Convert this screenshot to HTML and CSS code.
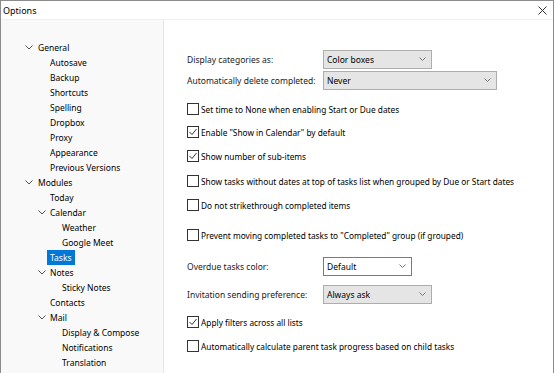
FILE: index.html
```html
<!DOCTYPE html>
<html>
<head>
<meta charset="utf-8">
<link rel="stylesheet" href="styles.css">
</head>
<body>
<div class="window">
  <div class="titlebar">
    <span class="title">Options</span>
    <svg class="close" width="9" height="9" viewBox="0 0 9 9"><path d="M0.5 0.5 L8.5 8.5 M8.5 0.5 L0.5 8.5" stroke="#333" stroke-width="1" fill="none"/></svg>
  </div>
  <div class="main">
    <div class="sidebar">
      <div class="node l0"><svg class="chev" width="8" height="5" viewBox="0 0 8 5"><polyline points="0.5,0.5 4,4 7.5,0.5" fill="none" stroke="#555" stroke-width="1"/></svg><span>General</span></div>
      <div class="node l1"><span>Autosave</span></div>
      <div class="node l1"><span>Backup</span></div>
      <div class="node l1"><span>Shortcuts</span></div>
      <div class="node l1"><span>Spelling</span></div>
      <div class="node l1"><span>Dropbox</span></div>
      <div class="node l1"><span>Proxy</span></div>
      <div class="node l1"><span>Appearance</span></div>
      <div class="node l1"><span>Previous Versions</span></div>
      <div class="node l0"><svg class="chev" width="8" height="5" viewBox="0 0 8 5"><polyline points="0.5,0.5 4,4 7.5,0.5" fill="none" stroke="#555" stroke-width="1"/></svg><span>Modules</span></div>
      <div class="node l1"><span>Today</span></div>
      <div class="node l1"><svg class="chev" width="8" height="5" viewBox="0 0 8 5"><polyline points="0.5,0.5 4,4 7.5,0.5" fill="none" stroke="#555" stroke-width="1"/></svg><span>Calendar</span></div>
      <div class="node l2"><span>Weather</span></div>
      <div class="node l2"><span>Google Meet</span></div>
      <div class="node l1"><span class="selected">Tasks</span></div>
      <div class="node l1"><svg class="chev" width="8" height="5" viewBox="0 0 8 5"><polyline points="0.5,0.5 4,4 7.5,0.5" fill="none" stroke="#555" stroke-width="1"/></svg><span>Notes</span></div>
      <div class="node l2"><span>Sticky Notes</span></div>
      <div class="node l1"><span>Contacts</span></div>
      <div class="node l1"><svg class="chev" width="8" height="5" viewBox="0 0 8 5"><polyline points="0.5,0.5 4,4 7.5,0.5" fill="none" stroke="#555" stroke-width="1"/></svg><span>Mail</span></div>
      <div class="node l2"><span>Display &amp; Compose</span></div>
      <div class="node l2"><span>Notifications</span></div>
      <div class="node l2"><span>Translation</span></div>
    </div>
    <div class="content">
      <div class="row sel-row">
        <span class="label">Display categories as:</span>
        <div class="select gray w109"><span>Color boxes</span><svg class="dd" width="7" height="4" viewBox="0 0 7 4"><polyline points="0.5,0.5 3.5,3.5 6.5,0.5" fill="none" stroke="#777" stroke-width="1"/></svg></div>
      </div>
      <div class="row sel-row mt3">
        <span class="label">Automatically delete completed:</span>
        <div class="select gray w174"><span>Never</span><svg class="dd" width="7" height="4" viewBox="0 0 7 4"><polyline points="0.5,0.5 3.5,3.5 6.5,0.5" fill="none" stroke="#777" stroke-width="1"/></svg></div>
      </div>
      <div class="row check mt11"><span class="box"></span><span>Set time to None when enabling Start or Due dates</span></div>
      <div class="row check mt5"><span class="box"><svg width="10" height="10" viewBox="0 0 10 10"><polyline points="1.5,5 4,7.5 8.5,2" fill="none" stroke="#333" stroke-width="1"/></svg></span><span>Enable "Show in Calendar" by default</span></div>
      <div class="row check mt6"><span class="box"><svg width="10" height="10" viewBox="0 0 10 10"><polyline points="1.5,5 4,7.5 8.5,2" fill="none" stroke="#333" stroke-width="1"/></svg></span><span>Show number of sub-items</span></div>
      <div class="row check mt7"><span class="box"></span><span>Show tasks without dates at top of tasks list when grouped by Due or Start dates</span></div>
      <div class="row check mt6"><span class="box"></span><span>Do not strikethrough completed items</span></div>
      <div class="row check mt12"><span class="box"></span><span>Prevent moving completed tasks to "Completed" group (if grouped)</span></div>
      <div class="row sel-row mt13">
        <span class="label">Overdue tasks color:</span>
        <div class="select white w89"><span>Default</span><svg class="dd" width="7" height="4" viewBox="0 0 7 4"><polyline points="0.5,0.5 3.5,3.5 6.5,0.5" fill="none" stroke="#777" stroke-width="1"/></svg></div>
      </div>
      <div class="row sel-row mt10">
        <span class="label">Invitation sending preference:</span>
        <div class="select gray w109"><span>Always ask</span><svg class="dd" width="7" height="4" viewBox="0 0 7 4"><polyline points="0.5,0.5 3.5,3.5 6.5,0.5" fill="none" stroke="#777" stroke-width="1"/></svg></div>
      </div>
      <div class="row check mt10"><span class="box"><svg width="10" height="10" viewBox="0 0 10 10"><polyline points="1.5,5 4,7.5 8.5,2" fill="none" stroke="#333" stroke-width="1"/></svg></span><span>Apply filters across all lists</span></div>
      <div class="row check mt6"><span class="box"></span><span>Automatically calculate parent task progress based on child tasks</span></div>
    </div>
  </div>
</div>
</body>
</html>
```
FILE: styles.css
```css
* { box-sizing: border-box; }
html, body { margin: 0; padding: 0; background: #fff; }
body {
  font-family: "Noto Sans", "Open Sans", sans-serif;
  font-size: 8.5px;
  color: #000;
}
.window {
  width: 554px;
  height: 373px;
  border-top: 1px solid #8c8c8c;
  border-left: 1px solid #8c8c8c;
  border-right: 1px solid #8c8c8c;
  display: flex;
  flex-direction: column;
  overflow: hidden;
}
.titlebar {
  height: 19px;
  display: flex;
  align-items: center;
  justify-content: space-between;
  padding: 0 6px 0 2px;
  border-bottom: 1px solid #f0f0f0;
  flex: none;
}
.title { font-size: 9px; }
.close { display: block; }
.main { flex: 1; display: flex; min-height: 0; }
.sidebar {
  width: 163px;
  flex: none;
  background: #f9f9f9;
  border-right: 1px solid #e6e6e6;
  padding-top: 20px;
}
.node {
  height: 15px;
  line-height: 15px;
  display: flex;
  align-items: center;
  white-space: nowrap;
  position: relative;
}
.node span { padding: 0 3px; }
.l0 { padding-left: 34px; }
.l1 { padding-left: 46px; }
.l2 { padding-left: 58px; }
.chev { position: absolute; margin-left: -10px; top: 5px; }
.l0 .chev { left: 34px; margin-left: -10px; }
.l1 .chev { left: 46px; margin-left: -9px; }
.selected { background: #0078d7; color: #fff; height: 15px; }
.content {
  flex: 1;
  padding: 30px 0 0 23px;
  display: flex;
  flex-direction: column;
}
.row { display: flex; align-items: center; height: 18px; white-space: nowrap; }
.label { width: 136px; color: #1a1a1a; }
.select {
  height: 19px;
  display: flex;
  align-items: center;
  justify-content: space-between;
  padding: 0 5px 0 3px;
  border: 1px solid #adadad;
}
.select.gray { background: #e5e5e5; }
.select.white { background: #fff; border-color: #7a7a7a; }
.dd { display: block; }
.w109 { width: 109px; }
.w174 { width: 174px; }
.w89 { width: 89px; }
.check { font-size: 8.3px; }
.check .box {
  width: 12px;
  height: 12px;
  border: 1px solid #333;
  background: #fff;
  margin-right: 2px;
  display: flex;
  align-items: center;
  justify-content: center;
  flex: none;
}
.check .box svg { display: block; }
.mt3 { margin-top: 3px; }
.mt5 { margin-top: 5px; }
.mt6 { margin-top: 6px; }
.mt7 { margin-top: 7px; }
.mt10 { margin-top: 10px; }
.mt11 { margin-top: 11px; }
.mt12 { margin-top: 12px; }
.mt13 { margin-top: 13px; }
```
